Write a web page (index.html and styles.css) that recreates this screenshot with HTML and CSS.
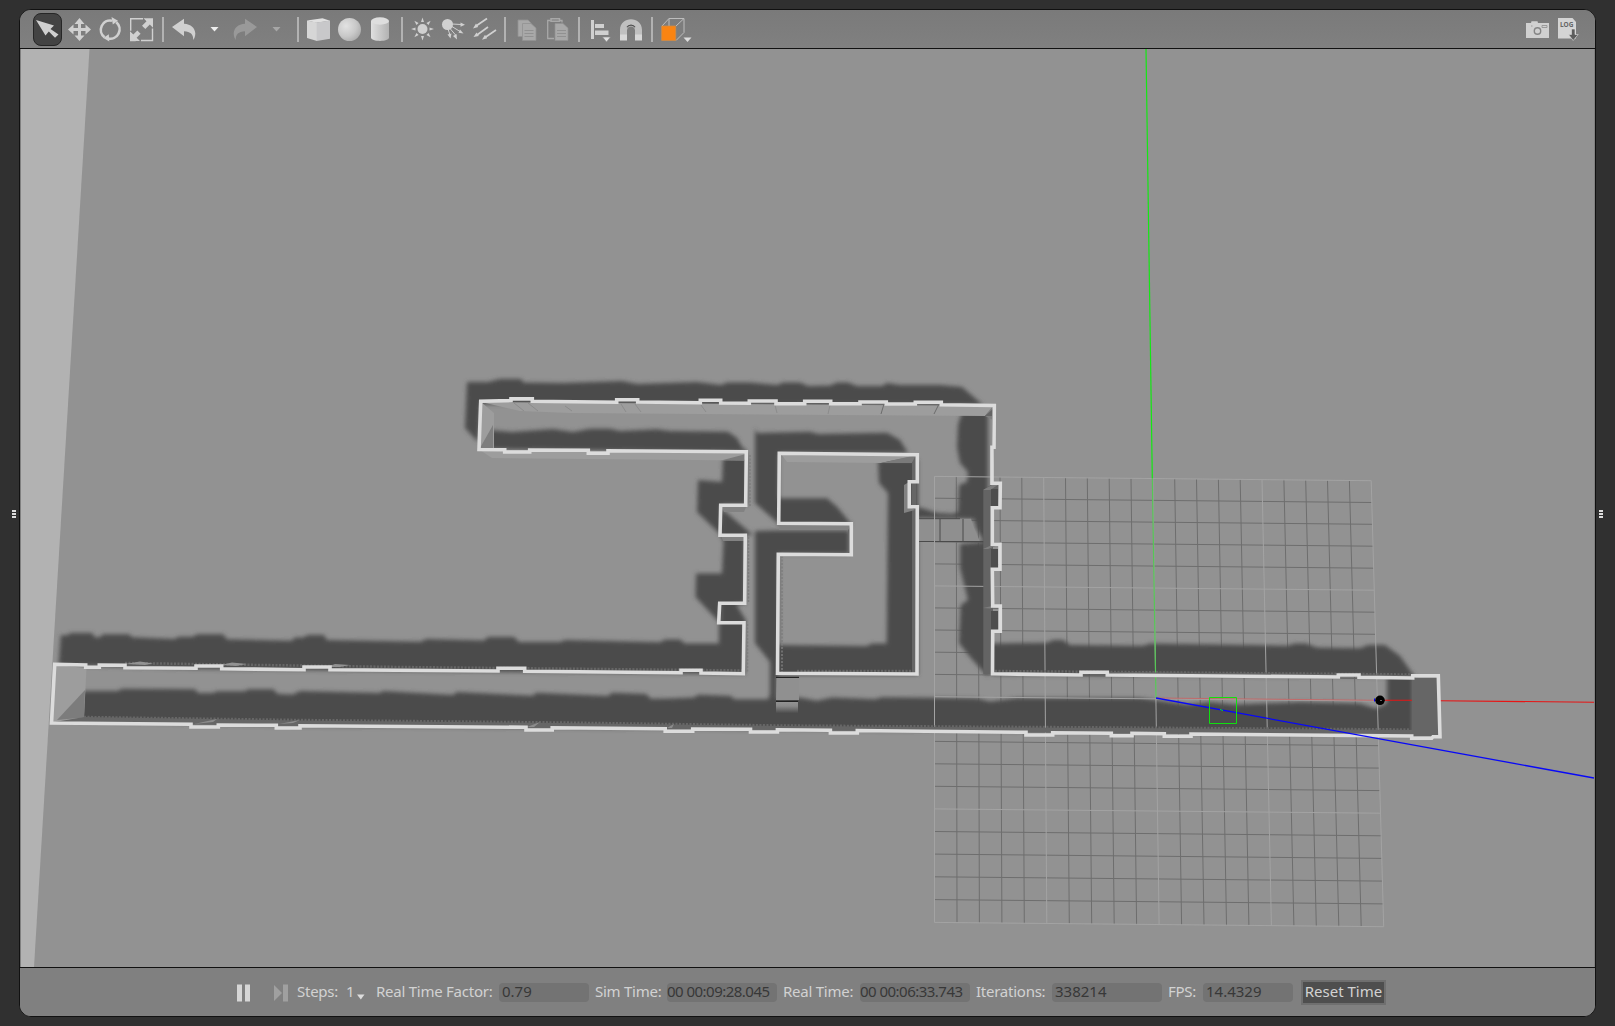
FILE: index.html
```html
<!DOCTYPE html>
<html lang="en">
<head>
<meta charset="utf-8">
<title>Gazebo</title>
<link rel="stylesheet" href="styles.css">
</head>
<body>
<div class="grip"><i></i><i></i><i></i></div>
<main class="window">
  <header class="toolbar">
    <button class="tool active" aria-label="Select"><svg width="27" height="31" viewBox="34 14 27 31"><path d="M36 20 L54 25.5 L50.5 29 L58.5 34.5 L55 37.8 L48.8 31.5 L45.5 35.5 Z"/></svg></button>
    <svg width="34" height="38" viewBox="62 10 34 38"><path d="M79.500 18l5 6h-3.500v4h4.500v-3.500l5.500 5-5.500 5v-3.500h-4.500v4.500h3.500l-5 5.500-5-5.500h3.500v-4.500h-4.500v3.500l-5.500-5 5.500-5v3.500h4.500v-4h-3.500z"/></svg>
    <svg width="30" height="38" viewBox="96 10 30 38"><g fill="none" stroke="#d0d0d0" stroke-width="2.600"><path d="M104.500 37.200A9.300 9.300 0 0 1 112 20.700M116.300 22.300A9.300 9.300 0 0 1 108 38.400"/></g><path d="M111.500 17l6.500 3.800-5.200 3.700zM109.300 41.500l-6-3.500 5.500-3.800z"/></svg>
    <svg width="34" height="38" viewBox="126 10 34 38"><path fill="none" stroke="#d0d0d0" stroke-width="1.400" d="M143 18.700h-12.300v12M130.700 36v4.500h5M141 40.500h11.500v-12"/><path d="M143.500 18.200h9.500v9.500l-3.200-3.200-4.500 4.500-3.300-3.300 4.500-4.500zM140 41h-10v-9.800l3.300 3.300 4-4 3.300 3.300-4 4z"/></svg>
    <span class="sep"></span>
    <svg width="40" height="38" viewBox="166 10 40 38"><path d="M172 27l12-8.300v5c7 .3 11 4.300 11.300 9.800 0 3-1 5-2 6.500 0-5.500-2.800-8.500-9.300-8.700v5z"/></svg>
    <svg width="19" height="38" viewBox="206 10 19 38"><path fill="#eee" d="M210.500 27h8l-4 4.500z"/></svg>
    <svg width="39" height="38" viewBox="225 10 39 38"><path fill="#999" d="M257 27l-12-8.300v5c-7 .3-11 4.300-11.300 9.800 0 3 1 5 2 6.500 0-5.500 2.800-8.500 9.300-8.700v5z"/></svg>
    <svg width="31" height="38" viewBox="264 10 31 38"><path fill="#a6a6a6" d="M272.500 27h8l-4 4.500z"/></svg>
    <span class="sep"></span>
    <svg width="33" height="38" viewBox="301 10 33 38"><path fill="#e0e0e0" d="M307 20.500l15.500-2.300 7.500 2.500-13.500 2z"/><path fill="#d6d6d6" d="M307 20.500l10 2v18.500l-10-3z"/><path fill="#c8c8ca" d="M316.700 22.500l13.300-2v18.200l-13.300 2.300z"/></svg>
    <svg width="31" height="38" viewBox="334 10 31 38"><defs><radialGradient id="ball" cx=".35" cy=".35" r=".75"><stop offset="0" stop-color="#e2e2e2"/><stop offset=".6" stop-color="#c8c8c8"/><stop offset="1" stop-color="#aaa"/></radialGradient><linearGradient id="cyl"><stop offset="0" stop-color="#e0e0e0"/><stop offset="1" stop-color="#b2b2b2"/></linearGradient></defs><circle cx="349.500" cy="29.500" r="11.500" fill="url(#ball)"/></svg>
    <svg width="34" height="38" viewBox="365 10 34 38"><path fill="url(#cyl)" d="M371 21v16.500c0 4.500 18 4.500 18 0v-16.500z"/><ellipse cx="380" cy="21" rx="9" ry="3.700" fill="#dedede"/></svg>
    <span class="sep"></span>
    <svg width="31" height="38" viewBox="405 10 31 38"><circle cx="422.500" cy="29" r="5"/><path d="M421 22l1.500-4.500 1.500 4.500zM421 36l1.500 4.500 1.500-4.500zM415.500 27.500l-4.500 1.500 4.500 1.500zM429.500 27.500l4.500 1.500-4.500 1.500z"/><path transform="rotate(45 422.500 29)" d="M421 22l1.500-4.500 1.500 4.500zM421 36l1.500 4.500 1.500-4.500zM415.500 27.500l-4.500 1.500 4.500 1.500zM429.500 27.500l4.500 1.500-4.500 1.500z"/></svg>
    <svg width="32" height="38" viewBox="436 10 32 38"><circle cx="447.500" cy="24.500" r="5.500"/><path fill="none" stroke="#d0d0d0" stroke-width="1" d="M452 24l9 .5M452 26.500l8 5M450 28.500l6 7M448 29l2 6"/><path d="M460.500 22.500l4.500 2.200-4.500 2zM460 29.500l3.500 4-5-.8zM456.500 34l.5 5.500-4-3.500zM451.500 33.500l-1 5-3-4z"/></svg>
    <svg width="34" height="38" viewBox="468 10 34 38"><path fill="none" stroke="#d0d0d0" stroke-width="1.700" d="M487 18.500l-11 7.500M488 27l-11 8M496 30l-11 7.500"/><path d="M473 28.500l3-5 2.200 3.500zM473.500 37l3-4.500 2.300 3.500zM482 39.800l3-5 2.200 3.500z"/></svg>
    <span class="sep"></span>
    <svg width="34" height="38" viewBox="508 10 34 38"><g fill="#a8a8a8" stroke="#929292" stroke-width=".8"><path d="M518 20h10l3 3v13.500h-13z"/><path d="M522.500 23.500h8.500l5 4.500v12.500h-13.500z"/></g><path stroke="#919191" d="M524.500 30.500h9M524.500 33.500h9M524.500 36.500h9"/></svg>
    <svg width="34" height="38" viewBox="542 10 34 38"><path fill="none" stroke="#a8a8a8" stroke-width="1.300" d="M554 38.500h-6.300v-18h3M560 20.500h2v2"/><path fill="none" stroke="#a8a8a8" stroke-width="1.500" d="M551 18.800h8.500v2.500h-8.500z"/><path fill="#a8a8a8" stroke="#929292" stroke-width=".7" d="M555 23.500h8l5 4.500v12.500h-13z"/><path stroke="#919191" d="M557 30.500h9M557 33.500h9M557 36.500h9"/></svg>
    <span class="sep"></span>
    <svg width="33" height="38" viewBox="582 10 33 38"><path d="M591 20h3v19h-3zM595 24h9v4h-9zM595 30.500h13.500v4.500h-13.500z"/><path fill="#e0e0e0" stroke="#888" stroke-width=".6" d="M602.500 37h8l-4 5z"/></svg>
    <svg width="34" height="38" viewBox="615 10 34 38"><path fill="#c0c0c0" d="M620 39.500v-9.500c0-14.500 22-14.500 22 0v9.500h-7v-9c0-5.500-8-5.500-8 0v9z"/><path fill="none" stroke="#505050" stroke-width="1.200" d="M627 27.300c1.500-3 6.500-3 8 0"/><path fill="#d8d8d8" d="M620 34.500h7v6h-7zM635 34.500h7v6h-7z"/></svg>
    <span class="sep"></span>
    <svg width="40" height="38" viewBox="655 10 40 38"><path fill="none" stroke="#bdbdbd" stroke-width="1" d="M662 26l7-7.500h15v14l-8 8M676 26l8-7.500M669 18.500v8"/><path fill="#fa8412" stroke="#cf8b47" stroke-width=".8" d="M661.700 26h14v14.500h-14z"/><path fill="#ddd" d="M683.500 37.500h8l-4 4.500z"/></svg>
    <svg class="right" width="29" height="38" viewBox="1524 10 29 38"><path fill="#d0d0d0" d="M1526 23h5l.5-1.700h6l.5 1.700h11v15h-23z"/><circle cx="1537.500" cy="31" r="3.200" fill="none" stroke="#858585" stroke-width="1.400"/><path fill="none" stroke="#8d8d8d" stroke-width=".8" d="M1542 25.500h5v2h-5zM1531 26h1.500"/></svg>
    <svg width="29" height="38" viewBox="1553 10 29 38"><path fill="#d4d4d4" d="M1558 18h14.500l3.500 4v16.500h-18z"/><text x="1560" y="26.700" class="log">LOG</text><path fill="#5d5d5d" stroke="#ddd" stroke-width=".6" d="M1571.500 29h3.500v5.500h3.200l-5 6-4.700-6h3z"/></svg>
  </header>

  <svg class="scene" viewBox="21 49 1573 918" width="1573" height="918">
    <defs>
      <filter id="soft" x="-5%" y="-5%" width="110%" height="110%"><feGaussianBlur stdDeviation="2.200"/></filter>
      <linearGradient id="fade" x1="0" y1="0" x2="0" y2="1"><stop offset="0" stop-color="#959595"/><stop offset=".4" stop-color="#888"/><stop offset="1" stop-color="#4d4d4d"/></linearGradient>
    </defs>
    <path fill="#b2b2b2" d="M21 49H89.500L34 967H21z"/>
    <path id="minor" class="minor"/>

    <g class="shadow" filter="url(#soft)">
      <path d="M467 382L488 382 500 379H521L523.500 382.500 563 383 622 381 637 384 697 382 721 385 727 382.500H750L777 385 783 382.500H800L808 386 830 385.500 837 382.500H848L857 386H882L887 383 900 385H940L962 387 983 405 481 404 478 442 465 428z"/>
      <path d="M490 430L512 432 553 429 573 432 590 428.700H610L620 431 657 429.300 670 431 728 431.700 737 438 742 447 748 452 490 449z"/>
      <path d="M723 458L722 482 698 480 697 512 720 534 723.500 541 722 573.500 696 573.500 695.500 597 719 622 719 643.500 685 643.500 680 639.500H665L660 642.300 565 640 560 642H519L514 637H488L484 640.500 426 639 421 641.700 327 640 324 635H308L303 637.500H295L291.500 640.700 227 639.300 223 634.300H197L193 636.700H178L175 639 132 637.300 129 634.300H103L100 637.300H95L92 633H70L68 635.300H60.700L58.700 665 196 669 520 672 745 674V622H720V604H745V535H721V505H747V453z"/>
      <path d="M722 509L753 535H721zM721 604H736L747 622H721z"/>
      <path d="M755 428L757 433 810 431.700 818 434 887 432.700 900 440 908 453H779V524L755 503z"/>
      <path d="M755 531L773 530.500H849V554H779V674H777V715H765L770 693V662L755 643z"/>
      <path d="M878 460L879 483 888 493 886.700 643.500H872L867 646 778 645V675H918V460zM778 498.300H827L837 506.700 852 525H778z"/>
      <path d="M962 412L958 425 957 447 960 463 968 472 967 482 959 485 958 512 953 514 937 513 925 509 917 507V518L974 519 976 528 984 542 960 544V568L968 600 960.700 605 959 643 970 657 988 677V412z"/>
      <path d="M991 643.500L1047 642.700 1053 640H1063L1070 645 1143 645.700 1150 643.500 1287 645.700 1295 643.500H1306L1317 647.500 1360 648.300 1368 645H1385L1400 656 1415 677 991 675z"/>
      <path d="M80 691H118L122 688.700 195 689.300 198 693H213L217 691.300H245L248 689.300H273L278 694 293 694.500 300 691 380 693 383 691 453 695 457 692 533 695.700 536 692.700 608 696 612 692.700 646 694 651 698.700 669 698.500 694 697.500 698 694.700 731 696 734 699.300H770L799 697.500 817 700.700 832 697.500 875 699.300 882 697.300 977 698.300 990 701.500 1017 698H1140L1187 704.500 1210 702 1235 704.500 1300 702 1360 703.500 1376 708.500 1387 703V676H1413V734L300 726 80 721z"/>
    </g>
    <path fill="#8f8f8f" d="M919 518.700H971L974 528 980 541.500H919z"/>
    <path class="block" d="M940 519V541.500M963 519V541.500M919 541.500H984M919 518.700H960"/>
    <path fill="#909090" d="M776.500 677H799V700H776z"/><path fill="url(#fade)" d="M776 701.500H798V713H776z"/>
    <path stroke="#222" stroke-width="1.200" fill="none" d="M776 677.300H799M776 701.300H798"/>
    <path id="major" class="major"/>
    <path class="green" d="M1146 49L1152.300 478"/><path class="green dim" d="M1152.300 478L1155.500 670 1156 698"/>
    <path fill="none" stroke="#c26a6a" d="M1156 698L1377 700.300"/>
    <path class="red" d="M1383 700.300H1412M1440 700.700L1594 702.300"/>

    <g class="faces">
      <path fill="#9d9d9d" d="M481 402L520 411 570 413 985 416 993 406zM481 402L494 413V448L479 450z"/>
      <path fill="#7e7e7e" d="M493 425V448H480zM985 416L993 406V420z"/>
      <path fill="#9d9d9d" d="M480 450L492 458 744 460.500 746 452z"/>
      <path fill="#7a7a7a" d="M723 460L744 460.500 746 454z"/>
      <path fill="#9d9d9d" d="M781 454L787 462 881 463 917 455z"/>
      <path fill="#7a7a7a" d="M881 463L912 463 917 455z"/>
      <path fill="#666" d="M912 463L916 455V674H912zM848 530L851 524V554H848z"/>
      <path fill="#828282" d="M779 524H851L848 530H779zM722 507H746L744 512H724zM721 536L723 541H744V535zM904 485L909 482V506L915 510 904 513z"/>
      <path fill="#646464" d="M985 416L994 408V447L992 484 983.300 490V674H993V507L999 507V484L992 484V416z"/>
      <path fill="#4d4d4d" d="M991 489H998V506H991zM991 549H998V568H991zM991 611H998V630H991z"/>
      <path fill="#7d7d7d" d="M983 490L992 485H998L990 490zM983 549L992 545H998L988 549zM983 608L992 606H998L990 608.500z"/>
      <path fill="#9d9d9d" d="M55 665L86.500 668 84 718 52 722z"/><path fill="#7c7c7c" d="M85 690L57 720 84 717.500z"/>
      <path fill="#666" d="M55 722L84 717 300 720.500 560 723 780 726 1120 728 1412 730V736L1190 734 692 729 300 726zM1412 678H1438L1440 736H1412zM1107 672L1412 675V677L1107 674z"/>
      <path class="teeth" d="M84 717L300 720 560 722.500 780 725.500 1120 727.500 1410 729.500M125 663L400 667 743 670.500M797 671H912M995 671L1410 674.500"/>
      <path class="teeth side" d="M750 455V507M748.500 537V602M747.500 624V672M782 556V672"/>
      <path fill="#929292" d="M125 664L140 661.500 153 663.500 145 665zM221 665L232 662.500 247 664 236 666zM327 667L335 664 350 665 340 667z"/>
      <path fill="#8c8c8c" d="M194 724L217 719 213 722zM279 724L300 720 293 723zM527 727L540 722 534 727zM667 728L674 724 672 728z"/>
      <path class="seam faint" d="M514 403L524 411M528 403L538 411M565 406L572 411M621 404L626 412M635 404L641 412M701 405L706 412M775 405L777 413M830 405L828 414"/>
      <path class="seam" d="M884 404L881 414M939 404L934 414"/>
    </g>

    <g class="walls">
      <path d="M479 449.500L480.700 401.300 511 400.600V398.900H532.300V401.300L616.700 402.300V399.700H637.700V402L700.300 402.700V400.300H720.700V403L749.300 403.300V401H776V403.700H804.700V401.300H830.700V403.700H860V402H886.300V404H915.300V402.300H941.300V404.700L994.300 405.500 994 447.300H992V483.300H1000.300L1000 507.700H992.300V544.300H1000V569.300H992.300L992.700 606H1000.300V631.300H992.700L992.500 673.800 1081 675V672.300H1107.300V675L1338.300 677V675H1359V677.200L1412.700 678V675.700H1438.300L1440 736.700H1433L1431.700 738.300H1411.700V736L1191 734V736.200H1164.300V733.800L1132 733.300V735.700H1111.300V733.300L1052.700 732.700V735H1026V732.300L857.300 730.500V733H830.400V730.300L777.400 729.700V732H750.500V729.300L692.700 729V731.300H665.200V728.700L552.200 727.700V730H526V727.300L300 725.700V728H276.300V725.300L218.300 725V727H191V724.300L51.500 723 54.700 664.300 85.700 665V667.300H99.300V665L125 665.300V667.700L196 668.300V666H221.700V668.700L304 669.700V667H330V669.700L498 671V668.300H524.700V671.300L681 672.700V670.300H701V673L743.300 673.700 744 622.700H718.700L719.700 603.300H744.700L745.300 535.300H720L720.700 505.300H745.700L746.300 451.700 608 450.700V453.300H588.300V450.300L529.700 450V452H504.700V449.700z"/>
      <path d="M779.300 453.300L917.300 454.700V481.700H909.300V506.700H917.300L917 674 777.500 673.300 778.300 554.300 851.300 554.700V523.700L778.700 523.300z"/>
    </g>
    <path class="blue" d="M1156 698L1594 778"/>
    <path class="pick" d="M1209.500 697.500H1236.500V723.500H1209.500zM1220 709.500l3 1"/>
    <circle cx="1380" cy="700.300" r="4.800" fill="#000"/><path stroke="#00f" d="M1374.500 698.500v3"/><path stroke="#666" d="M1380 700.500h2"/>
  </svg>

  <footer class="statusbar">
    <svg class="pause" width="14" height="18" viewBox="0 0 14 18"><path fill="#d6d6d6" d="M0 .5h5v17h-5zM8 .5h5v17h-5z"/></svg>
    <svg class="step" width="14" height="18" viewBox="0 0 14 18"><path fill="#a0a0a0" d="M0 1l8 8-8 8zM9 .5h5v17h-5z"/></svg>
    <span class="label steps">Steps:</span>
    <span class="label count">1<svg width="8" height="6" viewBox="0 0 8 6"><path fill="#ddd" d="M0 .5h7.500L3.800 5.500z"/></svg></span>
    <span class="label factor">Real Time Factor:</span><span class="field short">0.79</span>
    <span class="label sim">Sim Time:</span><span class="field time">00 00:09:28.045</span>
    <span class="label real">Real Time:</span><span class="field time">00 00:06:33.743</span>
    <span class="label iter">Iterations:</span><span class="field">338214</span>
    <span class="label fps">FPS:</span><span class="field short">14.4329</span>
    <button class="reset">Reset Time</button>
  </footer>
</main>
<div class="grip right-grip"><i></i><i></i><i></i></div>
<script src="grid.js"></script>
</body>
</html>
```
FILE: grid.js
```js
// Ground grid: 20 x 20 cells seen in perspective, with a light line every fifth cell.
const CELLS = 20;
const rowOffset = j => 21.76 * j + 0.027 * j * j;
const point = (i, j) => {
  const step = 21.835 + 0.625 * j / CELLS;
  return (934.5 + step * i).toFixed(1) + ' ' + (476.4 + 0.215 * i + rowOffset(j)).toFixed(1);
};
const lines = { minor: '', major: '' };
for (let k = 0; k <= CELLS; k++) {
  const kind = k % 5 === 0 ? 'major' : 'minor';
  lines[kind] += `M${point(k, 0)}L${point(k, CELLS)}M${point(0, k)}L${point(CELLS, k)}`;
}
for (const id in lines) document.getElementById(id).setAttribute('d', lines[id]);
```
FILE: styles.css
```css
* { box-sizing: border-box; }
body {
  margin: 0;
  width: 1615px;
  height: 1026px;
  overflow: hidden;
  display: flex;
  background: #303030;
  color: #d2d2d2;
  font: 15px/20px "Noto Sans", "Open Sans", sans-serif;
}
svg { display: block; flex: none; fill: #d0d0d0; }
button { font: inherit; color: inherit; padding: 0; border: 0; }
.grip {
  width: 19px;
  flex: none;
  display: flex;
  flex-direction: column;
  justify-content: center;
  gap: 1px;
  padding: 1px 0 0 12px;
}
.grip i { width: 4px; height: 2px; background: #ddd; }
.right-grip { padding-left: 3px; }
.window {
  width: 1577px;
  height: 1008px;
  margin-top: 9px;
  flex: none;
  border: 1px solid #111;
  border-radius: 12px;
  overflow: hidden;
  background: #808080;
  display: flex;
  flex-direction: column;
}
.toolbar {
  height: 39px;
  flex: none;
  display: flex;
  align-items: flex-start;
  padding: 0 13px;
  border-bottom: 1px solid #111;
  background: linear-gradient(#7a7a7a, #808080);
}
.tool.active {
  width: 29px;
  height: 33px;
  margin-top: 3px;
  border: 1px solid #262626;
  border-radius: 8px;
  background: #434343;
}
.sep {
  width: 2px;
  height: 25px;
  flex: none;
  margin: 7px 2px 0;
  background: #b2b2b2;
}
.right { margin-left: auto; }
.log { font: bold 6.5px "Noto Sans", sans-serif; fill: #666; }
.scene { margin-left: 1px; background: #929292; }
.minor { fill: none; stroke: #6e6e6e; stroke-width: 1; }
.major { fill: none; stroke: #a3a3a3; stroke-width: 1; }
.shadow { fill: #4b4b4b; }
.block { fill: none; stroke: #4a4a4a; stroke-width: 1; }
.green { fill: none; stroke: #14e814; stroke-width: 1.2; }
.green.dim { stroke: #55c755; }
.red { fill: none; stroke: #e81414; stroke-width: 1.1; }
.blue { fill: none; stroke: #0808f8; stroke-width: 1.3; }
.pick { fill: none; stroke: #10e010; stroke-width: 1; }
.teeth { fill: none; stroke: #666; stroke-width: 2.5; stroke-dasharray: 2 1.5; }
.side { stroke: #7d7d7d; stroke-width: 1.5; }
.seam { fill: none; stroke: #6c6c6c; stroke-width: 1; }
.seam.faint { stroke: #8c8c8c; }
.walls { fill: none; stroke: #dcdcdc; stroke-width: 3.6; stroke-linejoin: miter; }
.statusbar {
  flex: 1;
  display: flex;
  align-items: center;
  padding: 1px 0 0 217px;
  border-top: 1px solid #111;
  background: #808080;
  white-space: nowrap;
}
.pause { margin-right: 23px; }
.step { margin-right: 9px; }
.label { flex: none; padding-bottom: 3px; letter-spacing: -0.25px; }
.steps { width: 49px; }
.count { width: 30px; display: flex; align-items: center; gap: 3px; }
.count svg { margin-top: 12px; }
.factor { width: 123px; }
.sim { width: 72px; }
.real { width: 77px; }
.iter { width: 76px; }
.fps { width: 35px; }
.field {
  width: 110px;
  height: 19px;
  flex: none;
  margin-right: 6px;
  padding: 0 3px;
  border-radius: 4px;
  background: #737373;
  color: #383838;
  line-height: 16px;
}
.field.short { width: 90px; }
.field.time { padding: 0; letter-spacing: -0.52px; }
.reset {
  width: 85px;
  height: 25px;
  margin-left: 2px;
  padding-bottom: 3px;
  border: 2px solid #6f6f6f;
  background: #4e4e4e;
  line-height: 18px;
}
```
